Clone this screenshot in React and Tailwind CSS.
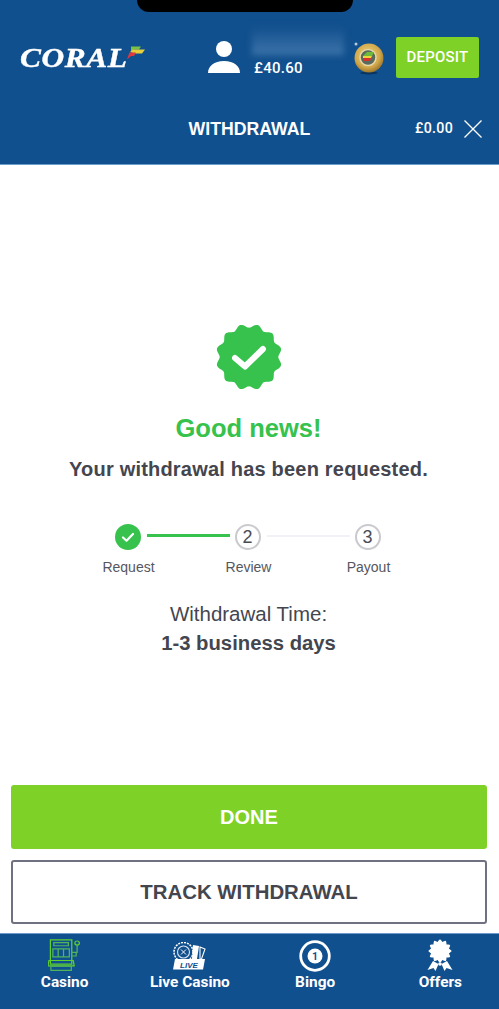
import React from "react";

const badgePath = () => {
  const pts = [];
  const n = 240;
  for (let i = 0; i < n; i++) {
    const t = (i / n) * Math.PI * 2;
    const r = 31.2 + 1.9 * Math.cos(12 * t + Math.PI);
    pts.push(`${(33 + r * Math.sin(t)).toFixed(2)} ${(33 - r * Math.cos(t)).toFixed(2)}`);
  }
  return "M" + pts.join("L") + "Z";
};

function Badge() {
  return (
    <svg width="66" height="66" viewBox="0 0 66 66">
      <path d={badgePath()} fill="#36c24c" />
      <path d="M19 34l10 8.500L47 25" fill="none" stroke="#fff" strokeWidth="6" strokeLinecap="round" strokeLinejoin="round" />
    </svg>
  );
}

function UserIcon() {
  return (
    <svg width="34" height="34" viewBox="0 0 34 34" fill="#fff">
      <circle cx="16" cy="9" r="8" />
      <path d="M0 33c0-7 6-12 16-12s16 5 16 12z" />
    </svg>
  );
}

function Coin() {
  return (
    <svg width="34" height="36" viewBox="0 0 34 36">
      <defs>
        <radialGradient id="g" cx="45%" cy="40%" r="65%">
          <stop offset="0%" stopColor="#f0d27a" />
          <stop offset="65%" stopColor="#d2a84c" />
          <stop offset="100%" stopColor="#8f6a22" />
        </radialGradient>
      </defs>
      <ellipse cx="18" cy="33" rx="9" ry="1.500" fill="#0a3560" />
      <circle cx="18" cy="18" r="14.500" fill="url(#g)" />
      <circle cx="17" cy="17.500" r="8" fill="#5a6a5c" stroke="#e6d9a8" strokeWidth="1.500" />
      <path d="M12 16l4-4h7l-2 4z" fill="#6dbb3a" />
      <path d="M12 16h9l-1 2h-8z" fill="#f0d23a" />
      <path d="M13 18h7l-1 3h-7z" fill="#d8322c" />
      <circle cx="5" cy="4" r="1.500" fill="#fff" opacity="0.7" />
    </svg>
  );
}

function Flag() {
  return (
    <svg width="18" height="14" viewBox="0 0 18 14">
      <path d="M4 0.500h10L12 3.500H7L4 5.500z" fill="#79c043" />
      <path d="M3 6l3-2.500h12L15 7.500H8z" fill="#e8cf3c" />
      <path d="M0 13.500l2.500-7H9L7 10H4z" fill="#e0383e" />
    </svg>
  );
}

function Check() {
  return (
    <svg width="26" height="26" viewBox="0 0 26 26">
      <circle cx="13" cy="13" r="13" fill="#36c24c" />
      <path d="M8 13.500l3.500 3.200L18 10" fill="none" stroke="#fff" strokeWidth="2.200" strokeLinecap="round" strokeLinejoin="round" />
    </svg>
  );
}

function StepNum({ n }) {
  return (
    <div className="w-[26px] h-[26px] rounded-full border-2 border-[#c9c9ce] flex items-center justify-center text-[18px] text-[#4a4c55]">
      {n}
    </div>
  );
}

function SlotIcon() {
  return (
    <svg width="33" height="34" viewBox="0 0 34 38" preserveAspectRatio="none" fill="none" stroke="#5fd02e" strokeWidth="1.300">
      <path d="M2.500 1h22v27h-22z" />
      <path d="M6 4h15v3.500H6zM5 11h17v9H5zM10.500 11v9M16 11v9" stroke="#4fb45a" />
      <path d="M1 24h25l1 6H0z" />
      <path d="M3 30.500h21V35H3z" stroke="#4fb45a" />
      <path d="M24 15h5v4h-5M30 7v8h-2" stroke="#4fb45a" />
      <circle cx="30" cy="4.500" r="2.300" />
    </svg>
  );
}

function LiveIcon() {
  return (
    <svg width="33" height="28" viewBox="0 0 33 28" className="mt-[-1px]">
      <circle cx="10.500" cy="10" r="9.500" fill="none" stroke="#fff" strokeWidth="1.500" strokeDasharray="2 1" />
      <circle cx="10.500" cy="10" r="6" fill="none" stroke="#dbe6f2" strokeWidth="1.100" />
      <path d="M8 7.500l5 5M13 7.500l-5 5" stroke="#fff" strokeWidth="1" />
      <path d="M20 3l6 1-2 13h-5z" fill="#fff" />
      <path d="M27 5l5 2-3.500 10H27z" fill="none" stroke="#fff" strokeWidth="1.100" />
      <path d="M2 17h30l-2 10.500H0z" fill="#fff" />
      <text x="16" y="25.500" textAnchor="middle" fontSize="8" fontWeight="700" fontStyle="italic" fill="#11508e" fontFamily="'Liberation Sans', sans-serif">LIVE</text>
    </svg>
  );
}

function BingoIcon() {
  return (
    <svg width="32" height="32" viewBox="0 0 32 32">
      <circle cx="16" cy="16" r="14.300" fill="none" stroke="#fff" strokeWidth="2.800" />
      <circle cx="16" cy="16" r="7.500" fill="#fff" />
      <text x="16" y="19.800" textAnchor="middle" fontSize="10.500" fontWeight="700" fill="#11508e" fontFamily="Roboto, sans-serif">1</text>
    </svg>
  );
}

function OffersIcon() {
  const pts = [];
  for (let i = 0; i < 48; i++) {
    const t = (i / 48) * Math.PI * 2;
    const r = 10.500 + 1.300 * Math.cos(12 * t);
    pts.push(`${(13 + r * Math.sin(t)).toFixed(2)},${(12 - r * Math.cos(t)).toFixed(2)}`);
  }
  return (
    <svg width="26" height="34" viewBox="0 0 26 34" fill="#fff">
      <polygon points={pts.join(" ")} />
      <path d="M6 22l5.500 3-3 7-2-3-6 2zM20 22l-5.500 3 3 7 2-3 6 2z" />
      <circle cx="13" cy="25" r="1.800" />
    </svg>
  );
}

function NavItem({ icon, label }) {
  return (
    <div className="flex flex-col items-center">
      <div className="h-[40px] flex items-center justify-center">{icon}</div>
      <div className="mt-[-3px] text-[15.4px] leading-[18px] font-bold text-white" style={{ fontFamily: "Roboto, sans-serif" }}>
        {label}
      </div>
    </div>
  );
}

export default function App() {
  return (
    <div className="relative w-[499px] h-[1009px] flex flex-col bg-white overflow-hidden font-['Liberation_Sans',Arial,sans-serif]">
      <div className="absolute top-0 left-[137px] w-[216px] h-[12px] bg-black rounded-b-[14px]" />

      <header className="h-[165px] shrink-0 bg-[#11508e] border-b border-[#6f9ccc] flex flex-col text-white">
        <div className="pt-[37px] h-[78px] flex items-center pl-[20px] pr-[20px]">
          <div className="flex items-start w-[126px] shrink-0">
            <span className="font-['Liberation_Serif',serif] font-bold italic text-[28px] leading-[30px] tracking-[0.5px] scale-x-[1.12] origin-left [-webkit-text-stroke:0.4px_white]">CORAL</span>
            <span className="ml-[11px] mt-[3px]"><Flag /></span>
          </div>
          <div className="ml-[62px] mt-[-2px]"><UserIcon /></div>
          <div className="relative ml-[12px] w-[92px] h-[41px] flex flex-col justify-end">
            <div className="absolute left-[-2px] top-[-10px] w-[92px] h-[28px] bg-gradient-to-b from-[#11508e] to-[#3d75ab] blur-[3px]" />
            <div className="relative font-['Roboto',sans-serif] font-medium text-[15px] leading-[18px] tracking-[0.3px] mb-[1px]">£40.60</div>
          </div>
          <div className="ml-[5px] w-[34px] mt-[1px]"><Coin /></div>
          <button className="ml-[11px] w-[83px] h-[41px] rounded-[2px] bg-[#7ed127] text-white font-['Roboto',sans-serif] font-medium text-[15px] tracking-[0.2px]">DEPOSIT</button>
        </div>

        <div className="grid grid-cols-[1fr_auto_1fr] items-center mt-[40px]">
          <div />
          <div className="font-bold text-[17.7px] leading-[20px]">WITHDRAWAL</div>
          <div className="flex items-center justify-end gap-[11px] pr-[17px]">
            <span className="font-['Roboto',sans-serif] font-medium text-[14.2px] tracking-[0.3px]">£0.00</span>
            <svg width="18" height="18" viewBox="0 0 18 18" stroke="#fff" strokeWidth="1.300" fill="none">
              <path d="M0.500 0.500l17 17M17.500 0.500l-17 17" />
            </svg>
          </div>
        </div>
      </header>

      <main className="flex-1 flex flex-col items-center pt-[159px] pr-[2px] text-[#44464f]">
        <Badge />
        <div className="mt-[22px] text-[25.5px] leading-[32px] font-bold text-[#36c24c]">Good news!</div>
        <div className="mt-[13px] text-[20px] leading-[24px] font-bold tracking-[0.2px]">Your withdrawal has been requested.</div>

        <div className="mt-[43px] mr-[2px] flex items-center">
          <Check />
          <div className="ml-[6px] mr-[5px] mt-[-3px] w-[83px] h-[3px] bg-[#36c24c]" />
          <StepNum n={2} />
          <div className="ml-[6px] mr-[5px] mt-[-3px] w-[83px] h-[2px] bg-[#f1f1f6]" />
          <StepNum n={3} />
        </div>
        <div className="mt-[8px] grid grid-cols-3 w-[360px] text-center text-[14px] leading-[18px] text-[#55575f]">
          <div>Request</div>
          <div>Review</div>
          <div>Payout</div>
        </div>

        <div className="mt-[25px] text-[20.5px] leading-[26px]">Withdrawal Time:</div>
        <div className="mt-[3px] text-[20.3px] leading-[26px] font-bold">1-3 business days</div>

        <div className="mt-auto w-full pl-[11px] pr-[10px] pb-[9px] flex flex-col gap-[11px]">
          <button className="h-[64px] w-full rounded-[3px] bg-[#7ed127] text-white text-[20px] font-bold">DONE</button>
          <button className="h-[64px] w-full rounded-[3px] border-2 border-[#6f7180] bg-white text-[#44464f] text-[20.4px] font-bold">TRACK WITHDRAWAL</button>
        </div>
      </main>

      <nav className="h-[76px] shrink-0 bg-[#11508e] border-t border-[#6f9ccc] pl-[2px] pt-[2px] overflow-hidden">
        <div className="w-[501px] grid grid-cols-4">
          <NavItem icon={<SlotIcon />} label="Casino" />
          <NavItem icon={<LiveIcon />} label="Live Casino" />
          <NavItem icon={<BingoIcon />} label="Bingo" />
          <NavItem icon={<OffersIcon />} label="Offers" />
        </div>
      </nav>
    </div>
  );
}
